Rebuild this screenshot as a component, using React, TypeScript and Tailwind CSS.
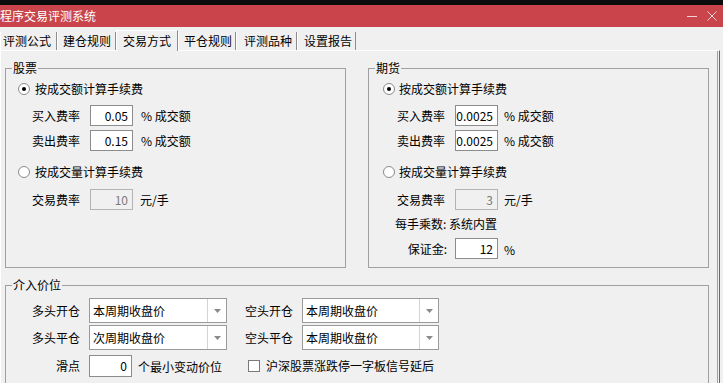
import React from 'react';

function Radio({ checked }: { checked?: boolean }) {
  return (
    <div className="w-[12px] h-[12px] rounded-full border border-[#8a8a8a] bg-white flex items-center justify-center shrink-0">
      {checked && <div className="w-[4px] h-[4px] rounded-full bg-black" />}
    </div>
  );
}

function NumBox({ value, disabled, w = 'w-[43px]', h = 'h-[21px]' }: { value: string; disabled?: boolean; w?: string; h?: string }) {
  return (
    <div
      className={`${w} ${h} shrink-0 border flex items-center justify-end pr-[4px] ${
        disabled ? 'border-[#b4b4b4] bg-[#f0f0f0] text-[#7a7a7a]' : 'border-[#8c8c8c] bg-white text-black'
      }`}
    >
      {value}
    </div>
  );
}

function Combo({ value, w }: { value: string; w: string }) {
  return (
    <div className={`${w} h-[25px] shrink-0 border border-[#9a9a9a] bg-white flex`}>
      <div className="flex-1 pl-[3px] flex items-center">{value}</div>
      <div className="w-[19px] border-l border-[#d4d4d4] flex items-center justify-center">
        <svg width="7" height="4" viewBox="0 0 7 4">
          <polygon points="0,0 7,0 3.5,4" fill="#8a8a8a" />
        </svg>
      </div>
    </div>
  );
}

const tabs = [
  { label: '评测公式', w: 'w-[57px] pl-[2px]' },
  { label: '建仓规则', w: 'w-[59px] pl-[5px]' },
  { label: '交易方式', w: 'w-[62px] pl-[6px]', active: true },
  { label: '平仓规则', w: 'w-[58px] pl-[5px]' },
  { label: '评测品种', w: 'w-[61px] pl-[7px]' },
  { label: '设置报告', w: 'w-[59px] pl-[6px]' },
];

export default function App() {
  return (
    <div className="w-[723px] h-[383px] overflow-hidden bg-[#f0f0f0] text-[12px] leading-[20px] text-black font-['Noto_Sans_CJK_SC',sans-serif]">
      <div className="h-[5px] bg-[#0c0c0c]" />

      {/* title bar */}
      <div className="h-[22px] bg-[#c9444b] flex items-center justify-between text-white">
        <span>程序交易评测系统</span>
        <div className="flex items-center gap-[10px] pr-[6px]">
          <div className="w-[10px] h-px bg-[#f1d3d5]" />
          <svg width="10" height="10" viewBox="0 0 10 10">
            <path d="M0.5 0.5 L9.5 9.5 M9.5 0.5 L0.5 9.5" stroke="#f1d3d5" strokeWidth="1" />
          </svg>
        </div>
      </div>

      {/* tabs */}
      <div className="h-[23px] flex items-end">
        {tabs.map(t => (
          <div
            key={t.label}
            className={`${t.w} flex items-center border-l border-l-white border-r border-r-[#8c8c8c] ${
              t.active ? 'h-[21px] -mb-px relative z-10 bg-[#f0f0f0] border-t border-t-white' : 'h-[18px]'
            }`}
          >
            {t.label}
          </div>
        ))}
      </div>

      {/* panel */}
      <div className="w-[720px] h-[340px] border-t border-t-white border-l border-l-white border-r border-r-[#696969]">
        <div className="h-full border-r border-r-[#a0a0a0] mr-px pt-[10px] pl-[4px]">
          <div className="flex gap-[22px]">
            {/* 股票 */}
            <fieldset className="w-[341px] h-[207px] m-0 p-0 border border-[#a0a0a0]">
              <legend className="ml-[6px] px-[1px] leading-[14px]">股票</legend>
              <div className="mt-[4px] h-[20px] pl-[12px] flex items-center gap-[5px]">
                <Radio checked />
                <span>按成交额计算手续费</span>
              </div>
              <div className="mt-[6px] h-[21px] pl-[26px] flex items-center">
                <span className="w-[48px]">买入费率</span>
                <div className="ml-[10px]"><NumBox value="0.05" /></div>
                <span className="ml-[8px]">% 成交额</span>
              </div>
              <div className="mt-[4px] h-[21px] pl-[26px] flex items-center">
                <span className="w-[48px]">卖出费率</span>
                <div className="ml-[10px]"><NumBox value="0.15" /></div>
                <span className="ml-[8px]">% 成交额</span>
              </div>
              <div className="mt-[11px] h-[20px] pl-[12px] flex items-center gap-[5px]">
                <Radio />
                <span>按成交量计算手续费</span>
              </div>
              <div className="mt-[7px] h-[21px] pl-[26px] flex items-center">
                <span className="w-[48px]">交易费率</span>
                <div className="ml-[10px]"><NumBox value="10" disabled /></div>
                <span className="ml-[7px]">元/手</span>
              </div>
            </fieldset>

            {/* 期货 */}
            <fieldset className="w-[341px] h-[207px] m-0 p-0 border border-[#a0a0a0]">
              <legend className="ml-[6px] px-[1px] leading-[14px]">期货</legend>
              <div className="mt-[4px] h-[20px] pl-[14px] flex items-center gap-[4px]">
                <Radio checked />
                <span>按成交额计算手续费</span>
              </div>
              <div className="mt-[6px] h-[21px] pl-[28px] flex items-center">
                <span className="w-[48px]">买入费率</span>
                <div className="ml-[10px]"><NumBox value="0.0025" /></div>
                <span className="ml-[6px]">% 成交额</span>
              </div>
              <div className="mt-[4px] h-[21px] pl-[28px] flex items-center">
                <span className="w-[48px]">卖出费率</span>
                <div className="ml-[10px]"><NumBox value="0.0025" /></div>
                <span className="ml-[6px]">% 成交额</span>
              </div>
              <div className="mt-[11px] h-[20px] pl-[14px] flex items-center gap-[4px]">
                <Radio />
                <span>按成交量计算手续费</span>
              </div>
              <div className="mt-[7px] h-[21px] pl-[28px] flex items-center">
                <span className="w-[48px]">交易费率</span>
                <div className="ml-[10px]"><NumBox value="3" disabled /></div>
                <span className="ml-[6px]">元/手</span>
              </div>
              <div className="mt-[4px] h-[20px] pl-[26px] flex items-center">每手乘数: 系统内置</div>
              <div className="mt-[4px] h-[21px] pl-[28px] flex items-center">
                <span className="w-[50px] text-right">保证金:</span>
                <div className="ml-[8px]"><NumBox value="12" /></div>
                <span className="ml-[6px] mt-[3px]">%</span>
              </div>
            </fieldset>
          </div>

          {/* 介入价位 */}
          <fieldset className="mt-[10px] w-[704px] h-[120px] m-0 p-0 border border-[#a0a0a0]">
            <legend className="ml-[6px] px-[1px] leading-[14px]">介入价位</legend>
            <div className="mt-[6px] pl-[26px] flex items-center">
              <div className="w-[213px] flex items-center">
                <span className="w-[48px] text-right">多头开仓</span>
                <div className="ml-[9px]"><Combo value="本周期收盘价" w="w-[138px]" /></div>
              </div>
              <span className="w-[48px] text-right">空头开仓</span>
              <div className="ml-[9px]"><Combo value="本周期收盘价" w="w-[137px]" /></div>
            </div>
            <div className="mt-[2px] pl-[26px] flex items-center">
              <div className="w-[213px] flex items-center">
                <span className="w-[48px] text-right">多头平仓</span>
                <div className="ml-[9px]"><Combo value="次周期收盘价" w="w-[138px]" /></div>
              </div>
              <span className="w-[48px] text-right">空头平仓</span>
              <div className="ml-[9px]"><Combo value="本周期收盘价" w="w-[137px]" /></div>
            </div>
            <div className="mt-[5px] pl-[26px] flex items-center">
              <div className="w-[213px] flex items-center">
                <span className="w-[48px] text-right">滑点</span>
                <div className="ml-[9px]"><NumBox value="0" h="h-[22px]" /></div>
                <span className="ml-[6px] mt-[2px]">个最小变动价位</span>
              </div>
              <div className="ml-[3px] w-[12px] h-[12px] border border-[#7a7a7a] bg-white" />
              <span className="ml-[6px]">沪深股票涨跌停一字板信号延后</span>
            </div>
          </fieldset>
        </div>
      </div>
    </div>
  );
}
